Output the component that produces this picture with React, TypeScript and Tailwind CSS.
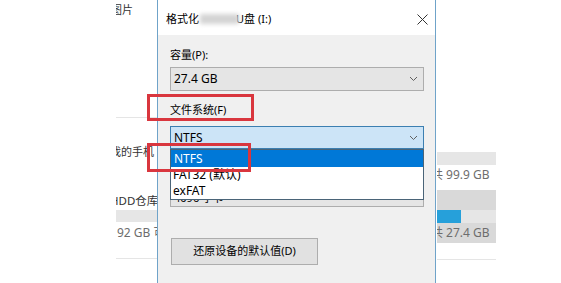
import React from "react";

const font = "font-['Noto_Sans','Noto_Sans_CJK_SC',sans-serif]";

function Chevron() {
  return (
    <svg width="9" height="6" viewBox="0 0 9 6" className="shrink-0">
      <path d="M1 1 L4.5 4.5 L8 1" fill="none" stroke="#606060" strokeWidth="1" />
    </svg>
  );
}

// the explorer window behind the dialog
function Explorer() {
  return (
    <div className="flex h-full text-[#333]">
      {/* left tile column, mostly covered */}
      <div className="ml-[116px] w-[41px] overflow-hidden">
        <div className="h-[20px] whitespace-nowrap text-[11px] leading-[20px] -ml-[5px]">图片</div>
        <div className="mt-[97px] border-t border-[#e5e5e5]" />
        <div className="mt-[26px] whitespace-nowrap text-[11px] leading-[16px] -ml-[6px]">我的手机</div>
        <div className="mt-[33px] whitespace-nowrap text-[11.5px] leading-[16px] -ml-[6px]">HDD仓库</div>
        <div className="mt-[1px] h-[12px] bg-[#e6e6e6]" />
        <div className="mt-[3px] whitespace-nowrap text-[12px] leading-[16px] ml-[1px] text-[#6d6d6d]">92 GB 可用</div>
        <div className="mt-[17px] border-t border-[#e5e5e5]" />
      </div>
      {/* right tile column */}
      <div className="ml-[280px] w-[59px] overflow-hidden">
        <div className="mt-[152px] h-[13px] bg-[#e6e6e6]" />
        <div className="mt-[2px] whitespace-nowrap text-[12px] leading-[16px] -ml-[6px] text-[#6d6d6d]">共 99.9 GB</div>
        <div className="mt-[7px] bg-[#d9d9d9]">
          <div className="h-[20px]" />
          <div className="flex h-[13px] bg-[#e6e6e6]">
            <div className="w-[24px] bg-[#26a0da]" />
          </div>
          <div className="h-[20px] whitespace-nowrap text-[12px] leading-[20px] -ml-[6px] text-[#6d6d6d]">共 27.4 GB</div>
        </div>
        <div className="mt-[16px] border-t border-[#e5e5e5]" />
      </div>
    </div>
  );
}

function Dialog() {
  return (
    <div className="absolute left-[157px] top-0 flex h-[283px] w-[279px] flex-col border-x border-[#6fa3c9] text-black">
      {/* title bar */}
      <div className="flex h-[35px] items-center bg-white pl-[8px] pr-[7px] pt-[3px]">
        <span className="text-[11px] whitespace-nowrap">格式化</span>
        <span className="ml-[1px] -mr-[3px] inline-block h-[10px] w-[39px] bg-[#d4d4d4] blur-[2px]" />
        <span className="text-[11px] whitespace-nowrap">U盘 (I:)</span>
        <div className="flex-1" />
        <svg width="11" height="11" viewBox="0 0 11 11">
          <path d="M0.5 0.5 L10.5 10.5 M10.5 0.5 L0.5 10.5" stroke="#333" strokeWidth="1" />
        </svg>
      </div>

      {/* body */}
      <div className="flex-1 bg-[#f0f0f0] px-[12px]">
        <div className="mt-[12px] text-[11px] leading-[16px]">容量(P):</div>
        <div className="mt-[4px] flex h-[24px] w-[254px] items-center justify-between border border-[#adadad] bg-[#e5e5e5] pl-[3px] pr-[5px]">
          <span className="text-[12px]">27.4 GB</span>
          <Chevron />
        </div>

        <div className="mt-[11px] text-[11px] leading-[16px]">文件系统(F)</div>
        <div className="relative mt-[8px] w-[254px]">
          <div className="flex h-[23px] items-center justify-between border border-[#3c7fb1] bg-[#cce4f7] pl-[3px] pr-[5px]">
            <span className="text-[12px]">NTFS</span>
            <Chevron />
          </div>
          {/* open list */}
          <div className="absolute left-0 right-0 top-full z-10 border border-[#4a6478] bg-white text-[12px]">
            <div className="flex h-[17px] items-center bg-[#0078d7] pl-[3px] text-white">NTFS</div>
            <div className="flex h-[16px] items-center pl-[2px]">FAT32 (默认)</div>
            <div className="flex h-[16px] items-center pl-[2px]">exFAT</div>
          </div>
        </div>

        {/* allocation unit combo, hidden under the list */}
        <div className="mt-[36px] flex h-[22px] w-[254px] items-center border border-[#adadad] bg-[#e5e5e5] pl-[3px] pt-[4px]">
          <span className="text-[11px]">4096 字节</span>
        </div>

        <button className="ml-[1px] mt-[31px] flex h-[27px] w-[147px] items-center justify-center border border-[#adadad] bg-[#e1e1e1] text-[11px]">
          还原设备的默认值(D)
        </button>
      </div>
    </div>
  );
}

export default function App() {
  return (
    <div className={`relative h-[283px] w-[561px] overflow-hidden bg-white ${font}`}>
      <Explorer />
      <Dialog />
      {/* red annotation boxes */}
      <div className="absolute left-[147px] top-[94px] h-[27px] w-[107px] border-[3px] border-[#d9363e]" />
      <div className="absolute left-[147px] top-[143px] z-20 h-[29px] w-[104px] border-[3px] border-[#d9363e]" />
    </div>
  );
}
